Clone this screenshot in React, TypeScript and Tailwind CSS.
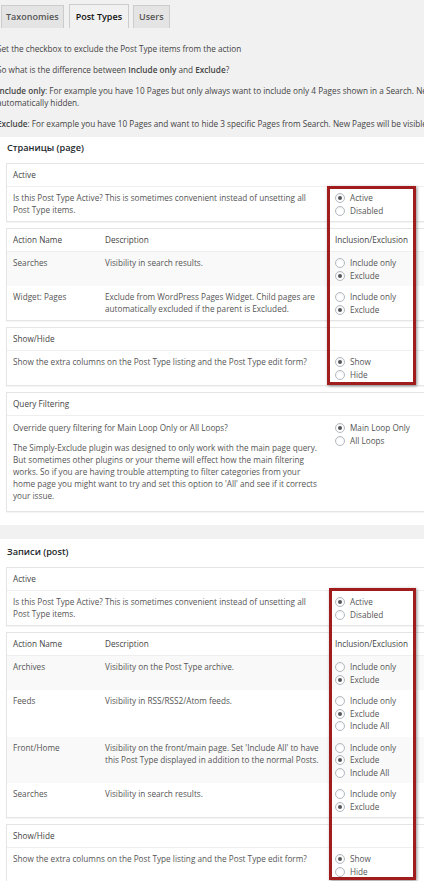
import React from "react";

type Opt = { label: string; checked?: boolean };

function Radio({ label, checked }: Opt) {
  return (
    <div className="flex items-center h-[12.5px] leading-[12.5px]">
      <span className="relative flex items-center justify-center w-[10px] h-[10px] rounded-full border border-[#b4b9be] bg-white shadow-[inset_0_1px_2px_rgba(0,0,0,0.07)] mr-[5px] shrink-0">
        {checked && <span className="w-[4px] h-[4px] rounded-full bg-[#555]" />}
      </span>
      <span className="text-[#555]">{label}</span>
    </div>
  );
}

function Radios({ opts }: { opts: Opt[] }) {
  return (
    <div className="flex flex-col">
      {opts.map((o) => (
        <Radio key={o.label} {...o} />
      ))}
    </div>
  );
}

function Box({ title, children, className = "" }: { title: React.ReactNode; children: React.ReactNode; className?: string }) {
  return (
    <div className={"ml-[6px] w-[440px] bg-white border border-[#e5e5e5] shadow-[0_1px_1px_rgba(0,0,0,0.04)] " + className}>
      <div className="px-[6px] py-[5px] leading-[12px] text-[#444] border-b border-[#eee]">{title}</div>
      {children}
    </div>
  );
}

function ActiveBox() {
  return (
    <Box title="Active">
      <div className="flex px-[6px] pt-[5px] pb-[4px]">
        <div className="w-[322px] pr-[14px] leading-[12px] text-[#555]">
          Is this Post Type Active? This is sometimes convenient instead of unsetting all Post Type items.
        </div>
        <Radios opts={[{ label: "Active", checked: true }, { label: "Disabled" }]} />
      </div>
    </Box>
  );
}

type Row = { name: string; desc: string; opts: Opt[] };

function ActionTable({ rows }: { rows: Row[] }) {
  return (
    <div className="ml-[6px] w-[440px] bg-white border border-[#e5e5e5] shadow-[0_1px_1px_rgba(0,0,0,0.04)] mt-[6px]">
      <div className="flex px-[6px] py-[5px] leading-[12px] text-[#444] border-b border-[#eee]">
        <div className="w-[92px]">Action Name</div>
        <div className="w-[230px]">Description</div>
        <div>Inclusion/Exclusion</div>
      </div>
      {rows.map((r, i) => (
        <div key={r.name} className={"flex px-[6px] pt-[5px] pb-[4px] " + (i % 2 === 0 ? "bg-[#f9f9f9]" : "bg-white")}>
          <div className="w-[92px] leading-[12px] text-[#555]">{r.name}</div>
          <div className="w-[230px] pr-[12px] leading-[12px] text-[#555]">{r.desc}</div>
          <Radios opts={r.opts} />
        </div>
      ))}
    </div>
  );
}

function ShowHide() {
  return (
    <Box title="Show/Hide" className="mt-[6px]">
      <div className="flex px-[6px] pt-[5px] pb-[4px]">
        <div className="w-[322px] pr-[10px] leading-[12px] text-[#555]">
          Show the extra columns on the Post Type listing and the Post Type edit form?
        </div>
        <Radios opts={[{ label: "Show", checked: true }, { label: "Hide" }]} />
      </div>
    </Box>
  );
}

const IE = (all = false): Opt[] =>
  all
    ? [{ label: "Include only" }, { label: "Exclude", checked: true }, { label: "Include All" }]
    : [{ label: "Include only" }, { label: "Exclude", checked: true }];

export default function App() {
  return (
    <div className="relative w-[424px] h-[881px] overflow-hidden bg-[#f1f1f1] font-['Open_Sans',sans-serif] text-[8.2px] text-[#555]">
      {/* Tabs */}
      <div className="flex items-end h-[28px] pl-[1px] text-[9px] font-semibold">
        <div className="h-[23px] flex items-center px-[4px] bg-[#e4e4e4] border border-b-0 border-[#ccc] text-[#555]">Taxonomies</div>
        <div className="h-[24px] flex items-center px-[6px] ml-[5px] bg-[#f1f1f1] border border-b-0 border-[#ccc] text-[#111]">Post Types</div>
        <div className="h-[23px] flex items-center px-[5px] ml-[4px] bg-[#e4e4e4] border border-b-0 border-[#ccc] text-[#555]">Users</div>
      </div>

      {/* Intro */}
      <div className="ml-[-3px] mt-[15px] leading-[12px] text-[#444] whitespace-nowrap">
        <p>Set the checkbox to exclude the Post Type items from the action</p>
        <p className="mt-[9px]">
          So what is the difference between <b className="font-semibold">Include only</b> and <b className="font-semibold">Exclude</b>?
        </p>
        <p className="mt-[9px]">
          <b className="font-semibold">Include only</b>: For example you have 10 Pages but only always want to include only 4 Pages shown in a Search. New Pages will be
          <br />
          automatically hidden.
        </p>
        <p className="mt-[9px]">
          <b className="font-semibold">Exclude</b>: For example you have 10 Pages and want to hide 3 specific Pages from Search. New Pages will be visible.
        </p>
      </div>

      {/* Page box */}
      <div className="mt-[7px] bg-white pt-[5px] pb-[13px]">
        <div className="pl-[7px] text-[9.2px] font-semibold leading-[12px] text-[#23282d] mb-[9px]">Страницы (page)</div>
        <ActiveBox />
        <ActionTable
          rows={[
            { name: "Searches", desc: "Visibility in search results.", opts: IE() },
            {
              name: "Widget: Pages",
              desc: "Exclude from WordPress Pages Widget. Child pages are automatically excluded if the parent is Excluded.",
              opts: IE(),
            },
          ]}
        />
        <ShowHide />
        <Box title="Query Filtering" className="mt-[6px]">
          <div className="flex px-[6px] pt-[6px] pb-[9px]">
            <div className="w-[322px] pr-[13px] leading-[12px] text-[#555]">
              <p>Override query filtering for Main Loop Only or All Loops?</p>
              <p className="mt-[8px]">
                The Simply-Exclude plugin was designed to only work with the main page query. But sometimes other plugins or your theme will effect how the main filtering works. So if you are having trouble attempting to filter categories from your home page you might want to try and set this option to 'All' and see if it corrects your issue.
              </p>
            </div>
            <Radios opts={[{ label: "Main Loop Only", checked: true }, { label: "All Loops" }]} />
          </div>
        </Box>
      </div>

      {/* Post box */}
      <div className="mt-[14px] bg-white pt-[7px] pb-[13px]">
        <div className="pl-[7px] text-[9.2px] font-semibold leading-[12px] text-[#23282d] mb-[9px]">Записи (post)</div>
        <ActiveBox />
        <ActionTable
          rows={[
            { name: "Archives", desc: "Visibility on the Post Type archive.", opts: IE() },
            { name: "Feeds", desc: "Visibility in RSS/RSS2/Atom feeds.", opts: IE(true) },
            {
              name: "Front/Home",
              desc: "Visibility on the front/main page. Set 'Include All' to have this Post Type displayed in addition to the normal Posts.",
              opts: IE(true),
            },
            { name: "Searches", desc: "Visibility in search results.", opts: IE() },
          ]}
        />
        <ShowHide />
      </div>

      {/* Red highlight frames */}
      <div className="absolute left-[327px] top-[186px] w-[89px] h-[199px] border-[3px] border-[#a11d1d] shadow-[1px_1px_3px_rgba(0,0,0,0.45)] pointer-events-none" />
      <div className="absolute left-[329px] top-[588px] w-[87px] h-[292px] border-[3px] border-[#a11d1d] shadow-[1px_1px_3px_rgba(0,0,0,0.45)] pointer-events-none" />
    </div>
  );
}
